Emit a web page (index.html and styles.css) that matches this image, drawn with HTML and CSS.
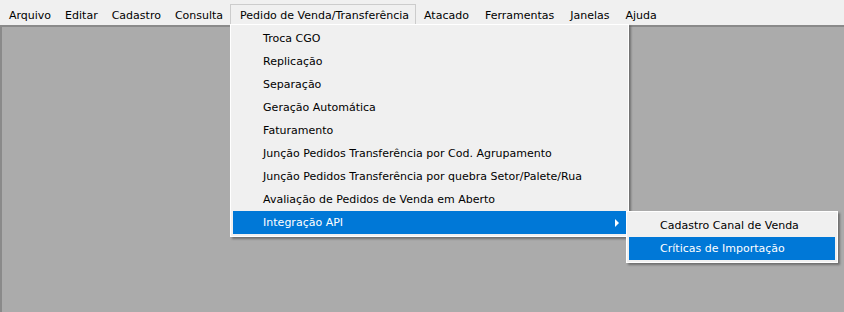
FILE: index.html
```html
<html lang="pt-BR">
<head>
    <meta charset="UTF-8">
    <title>Pedido de Venda</title>
    <link rel="stylesheet" href="styles.css">
</head>
<body>
    <ul class="menubar">
        <li>Arquivo</li>
        <li>Editar</li>
        <li>Cadastro</li>
        <li>Consulta</li>
        <li class="open">Pedido de Venda/Transferência
            <ul class="dropdown">
                <li>Troca CGO</li>
                <li>Replicação</li>
                <li>Separação</li>
                <li>Geração Automática</li>
                <li>Faturamento</li>
                <li>Junção Pedidos Transferência por Cod. Agrupamento</li>
                <li>Junção Pedidos Transferência por quebra Setor/Palete/Rua</li>
                <li>Avaliação de Pedidos de Venda em Aberto</li>
                <li class="sel sub">Integração API
                    <span class="arrow"></span>
                    <ul class="dropdown side">
                        <li>Cadastro Canal de Venda</li>
                        <li class="sel">Críticas de Importação</li>
                    </ul>
                </li>
            </ul>
        </li>
        <li>Atacado</li>
        <li>Ferramentas</li>
        <li>Janelas</li>
        <li>Ajuda</li>
    </ul>
    <div class="client"></div>
</body>
</html>
```

FILE: styles.css
```css
body{
    margin: 0;
    height: 312px;
    display: flex;
    flex-direction: column;
    background: #f0f0f0;
    font-family: 'DejaVu Sans', Verdana, sans-serif;
    font-size: 11px;
    color: #000;
}
ul{
    list-style: none;
    margin: 0;
    padding: 0;
}
.menubar{
    display: flex;
    height: 25px;
    padding-left: 2px;
    align-items: flex-start;
    background: #f0f0f0;
}
.menubar > li{
    position: relative;
    height: 20px;
    margin-top: 4px;
    padding: 0 6px;
    line-height: 21px;
    border: 1px solid transparent;
    border-bottom: none;
    white-space: nowrap;
}
.menubar > li.open{
    border-color: #cccccc;
    padding: 0 6px 0 9px;
}
.menubar > li.open ~ li{
    padding: 0 7px;
}
.client{
    flex: 1;
    background: #ababab;
    border-top: 2px solid #8a8a8a;
    border-left: 2px solid #8a8a8a;
}
.dropdown{
    position: absolute;
    top: 19px;
    left: -1px;
    width: 393px;
    padding: 2px;
    background: #f0f0f0;
    border: 1px solid #fff;
    box-shadow: 2px 2px 2px rgba(0,0,0,0.35);
    z-index: 2;
}
.dropdown > li{
    position: relative;
    height: 23px;
    line-height: 23px;
    padding-left: 30px;
    white-space: nowrap;
}
.dropdown > li.sel{
    background: #0078d7;
    color: #fff;
}
.arrow{
    position: absolute;
    right: 7px;
    top: 8px;
    border-left: 4px solid #fff;
    border-top: 4px solid transparent;
    border-bottom: 4px solid transparent;
}
.dropdown.side{
    top: 0;
    left: 393px;
    width: 206px;
    color: #000;
}
.dropdown.side > li{
    padding-left: 31px;
}
```
